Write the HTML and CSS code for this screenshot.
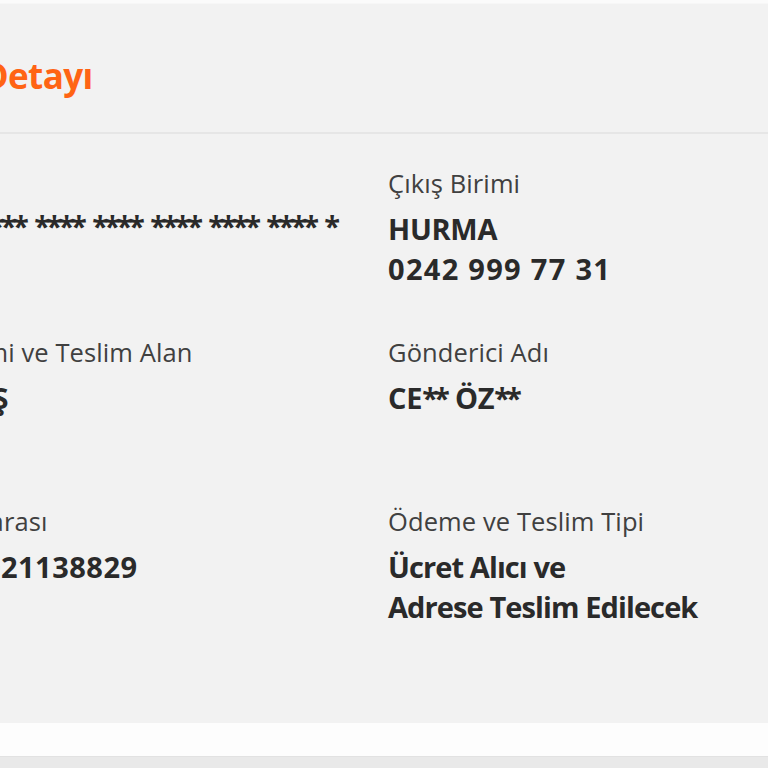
FILE: index.html
```html
<!DOCTYPE html>
<html lang="tr">
<head>
<meta charset="utf-8">
<title>Gönderi Detayı</title>
<link rel="stylesheet" href="styles.css">
</head>
<body>
<div class="viewport">
  <section class="panel">
    <header class="panel-head">
      <h2 class="title">Gönderi Detayı</h2>
    </header>
    <div class="details">
      <div class="field">
        <div class="label">Alıcı</div>
        <div class="value mask">**** **** **** **** **** **** **** **** *</div>
      </div>
      <div class="field">
        <div class="label">Çıkış Birimi</div>
        <div class="value">HURMA</div>
        <div class="value num">0242 999 77 31</div>
      </div>
      <div class="field">
        <div class="label">Teslim Birimi ve Teslim Alan</div>
        <div class="value wide">ALİ** BAŞ</div>
      </div>
      <div class="field">
        <div class="label">Gönderici Adı</div>
        <div class="value">CE<span class="stars">**</span> ÖZ<span class="stars">**</span></div>
      </div>
      <div class="field">
        <div class="label">Takip Numarası</div>
        <div class="value num-left">KP01082021138829</div>
      </div>
      <div class="field">
        <div class="label">Ödeme ve Teslim Tipi</div>
        <div class="value text">Ücret Alıcı ve</div>
        <div class="value text">Adrese Teslim Edilecek</div>
      </div>
    </div>
  </section>
  <div class="gap-band"></div>
  <div class="next-panel"></div>
</div>
</body>
</html>
```
FILE: styles.css
```css
html, body {
  margin: 0;
  padding: 0;
  background: #fbfbfb;
  overflow: hidden;
}

.viewport {
  width: 768px;
  height: 768px;
  overflow: hidden;
  padding-top: 4px;
  box-sizing: border-box;
  font-family: "Open Sans", "Noto Sans", sans-serif;
}

.panel {
  background: #f2f2f2;
  margin-left: -180px;
  width: 1100px;
  box-shadow: 0 0 2px rgba(0, 0, 0, 0.05);
}

.panel-head {
  height: 130px;
  box-sizing: border-box;
  padding-top: 16px;
  display: flex;
  align-items: center;
  padding-left: 19px;
  border-bottom: 2px solid #e6e6e6;
}

.title {
  margin: 0;
  font-size: 35px;
  font-weight: 700;
  color: #ff6414;
  letter-spacing: -0.6px;
  line-height: 40px;
}

.details {
  display: grid;
  grid-template-columns: 528px 1fr;
  grid-auto-rows: 169px;
  padding: 34px 0 48px 40px;
}

.field {
  display: flex;
  flex-direction: column;
}

.label {
  font-size: 25.5px;
  line-height: 30px;
  color: #404040;
  margin-bottom: 11px;
  white-space: nowrap;
  letter-spacing: 0.1px;
}

.value {
  font-size: 29px;
  line-height: 40px;
  font-weight: 700;
  color: #2a2a2a;
  white-space: nowrap;
  letter-spacing: -0.3px;
}

.value.num {
  letter-spacing: 1.3px;
}

.value.num-left {
  letter-spacing: 0.5px;
}

.value.wide {
  letter-spacing: 1px;
}

.value.text {
  letter-spacing: -0.9px;
}

.stars {
  letter-spacing: -4px;
  margin-right: 2px;
}

.mask {
  letter-spacing: -3.5px;
  word-spacing: 4.8px;
  line-height: 30px;
  margin-top: 2px;
}

.gap-band {
  height: 33px;
  background: #fdfdfd;
}

.next-panel {
  height: 20px;
  background: #e9e9e9;
  border-top: 1px solid #e2e2e2;
}
```
